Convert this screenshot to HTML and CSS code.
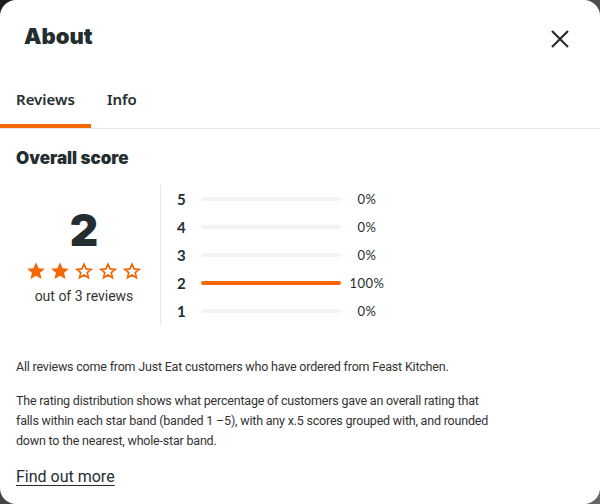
FILE: index.html
```html
<!DOCTYPE html>
<html lang="en">
<head>
<meta charset="utf-8">
<link rel="stylesheet" href="styles.css">
</head>
<body>
<div class="modal">
  <header class="head">
    <h1 class="title">About</h1>
    <button class="close" aria-label="Close">
      <svg width="20" height="20" viewBox="0 0 20 20"><path d="M2 2L18 18M18 2L2 18" stroke="#242e30" stroke-width="2.2" fill="none"/></svg>
    </button>
  </header>
  <nav class="tabs">
    <span class="tab active">Reviews</span>
    <span class="tab">Info</span>
  </nav>
  <section class="content">
    <h2 class="sub">Overall score</h2>
    <div class="score">
      <div class="summary">
        <div class="big">2</div>
        <div class="stars">
          <svg class="star" viewBox="0 0 24 24"><path class="fill" d="M12 1.5l3.1 7.1 7.6.6-5.8 5 1.8 7.5L12 17.7l-6.7 4 1.8-7.5-5.8-5 7.6-.6z"/></svg>
          <svg class="star" viewBox="0 0 24 24"><path class="fill" d="M12 1.5l3.1 7.1 7.6.6-5.8 5 1.8 7.5L12 17.7l-6.7 4 1.8-7.5-5.8-5 7.6-.6z"/></svg>
          <svg class="star" viewBox="0 0 24 24"><path class="line" d="M12 3.8l2.5 5.7 6.1.5-4.7 4 1.5 6L12 16.8l-5.4 3.2 1.5-6-4.7-4 6.1-.5z"/></svg>
          <svg class="star" viewBox="0 0 24 24"><path class="line" d="M12 3.8l2.5 5.7 6.1.5-4.7 4 1.5 6L12 16.8l-5.4 3.2 1.5-6-4.7-4 6.1-.5z"/></svg>
          <svg class="star" viewBox="0 0 24 24"><path class="line" d="M12 3.8l2.5 5.7 6.1.5-4.7 4 1.5 6L12 16.8l-5.4 3.2 1.5-6-4.7-4 6.1-.5z"/></svg>
        </div>
        <div class="count">out of 3 reviews</div>
      </div>
      <div class="dist">
        <div class="row"><span class="lbl">5</span><span class="bar"><span class="fillbar" style="width:0%"></span></span><span class="pct">0%</span></div>
        <div class="row"><span class="lbl">4</span><span class="bar"><span class="fillbar" style="width:0%"></span></span><span class="pct">0%</span></div>
        <div class="row"><span class="lbl">3</span><span class="bar"><span class="fillbar" style="width:0%"></span></span><span class="pct">0%</span></div>
        <div class="row"><span class="lbl">2</span><span class="bar"><span class="fillbar" style="width:100%"></span></span><span class="pct">100%</span></div>
        <div class="row"><span class="lbl">1</span><span class="bar"><span class="fillbar" style="width:0%"></span></span><span class="pct">0%</span></div>
      </div>
    </div>
    <p class="text first">All reviews come from Just Eat customers who have ordered from Feast Kitchen.</p>
    <p class="text">The rating distribution shows what percentage of customers gave an overall rating that falls within each star band (banded 1 –5), with any x.5 scores grouped with, and rounded down to the nearest, whole-star band.</p>
    <a class="more" href="#">Find out more</a>
  </section>
</div>
</body>
</html>
```
FILE: styles.css
```css
* { box-sizing: border-box; }
html, body { margin: 0; padding: 0; }
body {
  width: 600px;
  height: 504px;
  overflow: hidden;
  background: linear-gradient(135deg, #1a1a1a 0%, #4a4a4a 50%, #666 100%);
  font-family: "Roboto", "Noto Sans", sans-serif;
  color: #242e30;
}
.modal {
  width: 600px;
  height: 504px;
  background: #fff;
  border-radius: 16px;
  overflow: hidden;
}
.head {
  display: flex;
  justify-content: space-between;
  align-items: flex-start;
  padding: 21px 30px 0 24px;
  height: 76px;
}
.title {
  margin: 0;
  font-family: "Inter", sans-serif;
  font-weight: 900;
  font-size: 22px;
  line-height: 30px;
  color: #242e30;
}
.close {
  border: 0;
  background: none;
  padding: 0;
  margin-top: 8px;
  width: 20px;
  height: 20px;
  display: flex;
}
.tabs {
  display: flex;
  height: 53px;
  border-bottom: 1px solid #e8e8e8;
}
.tab {
  font-family: "Noto Sans", sans-serif;
  font-weight: 600;
  font-size: 15px;
  color: #242e30;
  display: flex;
  align-items: center;
  padding: 1px 16px 3px;
  border-bottom: 4px solid transparent;
}
.tab.active { border-bottom-color: #f36805; }
.content { padding: 18px 16px 0; }
.sub {
  margin: 0;
  font-family: "Inter", sans-serif;
  font-weight: 900;
  font-size: 17px;
  line-height: 22px;
}
.score {
  display: flex;
  margin-top: 16px;
}
.summary {
  width: 136px;
  margin-right: 8px;
  display: flex;
  flex-direction: column;
  align-items: center;
  justify-content: center;
}
.big {
  font-family: "Inter", sans-serif;
  font-weight: 900;
  font-size: 44px;
  line-height: 46px;
  margin-top: 2px;
}
.stars { display: flex; gap: 4px; margin-top: 8px; }
.star { width: 20px; height: 20px; display: block; }
.star .fill { fill: #f36805; }
.star .line { fill: none; stroke: #f36805; stroke-width: 2; stroke-linejoin: miter; }
.count {
  font-size: 14px;
  line-height: 18px;
  margin-top: 6px;
  color: #333;
}
.dist {
  border-left: 1px solid #e8e8e8;
  padding-left: 16px;
  display: flex;
  flex-direction: column;
}
.row {
  display: flex;
  align-items: center;
  height: 28px;
  font-family: "Lato", sans-serif;
}
.lbl {
  width: 24px;
  font-weight: 700;
  font-size: 15px;
}
.bar {
  width: 140px;
  height: 4px;
  border-radius: 2px;
  background: #f5f3f1;
  display: flex;
}
.fillbar {
  height: 4px;
  border-radius: 2px;
  background: #f36805;
}
.pct {
  width: 52px;
  text-align: center;
  font-size: 13px;
  letter-spacing: 0.5px;
}
.text {
  max-width: 486px;
  font-size: 12.5px;
  letter-spacing: -0.2px;
  line-height: 20px;
  margin: 0;
  color: #333;
}
.text.first { margin: 32px 0 14px; }
.more {
  display: inline-block;
  margin-top: 16px;
  font-size: 16px;
  color: #242e30;
  text-decoration: underline;
  text-underline-offset: 3px;
}
```
